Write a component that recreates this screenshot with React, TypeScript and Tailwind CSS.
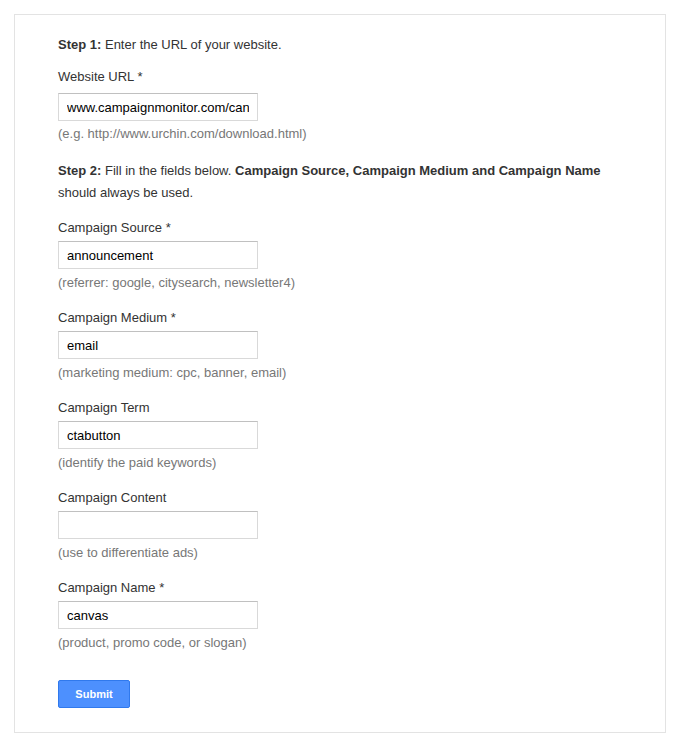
import React from "react";

type Field = {
  label: string;
  required?: boolean;
  value: string;
  hint: string;
};

const fields: Field[] = [
  { label: "Campaign Source", required: true, value: "announcement", hint: "(referrer: google, citysearch, newsletter4)" },
  { label: "Campaign Medium", required: true, value: "email", hint: "(marketing medium: cpc, banner, email)" },
  { label: "Campaign Term", value: "ctabutton", hint: "(identify the paid keywords)" },
  { label: "Campaign Content", value: "", hint: "(use to differentiate ads)" },
  { label: "Campaign Name", required: true, value: "canvas", hint: "(product, promo code, or slogan)" },
];

function TextField({ label, required, value, hint, first }: Field & { first?: boolean }) {
  return (
    <div className={first ? "mt-[14px]" : "mt-[15px]"}>
      <label className="block leading-[20px] text-[#333]">
        {label}
        {required ? " *" : ""}
      </label>
      <input
        type="text"
        defaultValue={value}
        className="mt-[3px] block h-[28px] w-[200px] border border-[#d9d9d9] border-t-[#c0c0c0] bg-white px-[8px] text-[13px] text-black outline-none"
      />
      <p className="mt-[4px] leading-[20px] text-[#777]">{hint}</p>
    </div>
  );
}

export default function App() {
  return (
    <div className="min-h-screen bg-white pt-[14px] pl-[14px] font-['Liberation_Sans',Arial,sans-serif] text-[13px]">
      <div className="w-[652px] border border-[#e3e3e3] pl-[43px] pr-[43px] pt-[19px] pb-[24px]">
        <p className="leading-[22px] text-[#333]">
          <b>Step 1:</b> Enter the URL of your website.
        </p>

        <div className="mt-[11px]">
          <label className="block leading-[20px] text-[#333]">Website URL *</label>
          <input
            type="text"
            defaultValue="www.campaignmonitor.com/canvas"
            className="mt-[6px] block h-[28px] w-[200px] border border-[#d9d9d9] border-t-[#c0c0c0] bg-white px-[8px] text-[13px] text-black outline-none"
          />
          <p className="mt-[3px] leading-[20px] text-[#777]">(e.g. http://www.urchin.com/download.html)</p>
        </div>

        <p className="mt-[16px] leading-[22px] text-[#333]">
          <b>Step 2:</b> Fill in the fields below. <b>Campaign Source, Campaign Medium and Campaign Name</b> should
          always be used.
        </p>

        {fields.map((f, i) => (
          <TextField key={f.label} {...f} first={i === 0} />
        ))}

        <button
          type="button"
          className="mt-[27px] block h-[28px] w-[72px] rounded-[2px] border border-[#3079ed] bg-[#4d90fe] text-[11px] font-bold text-white"
        >
          Submit
        </button>
      </div>
    </div>
  );
}
